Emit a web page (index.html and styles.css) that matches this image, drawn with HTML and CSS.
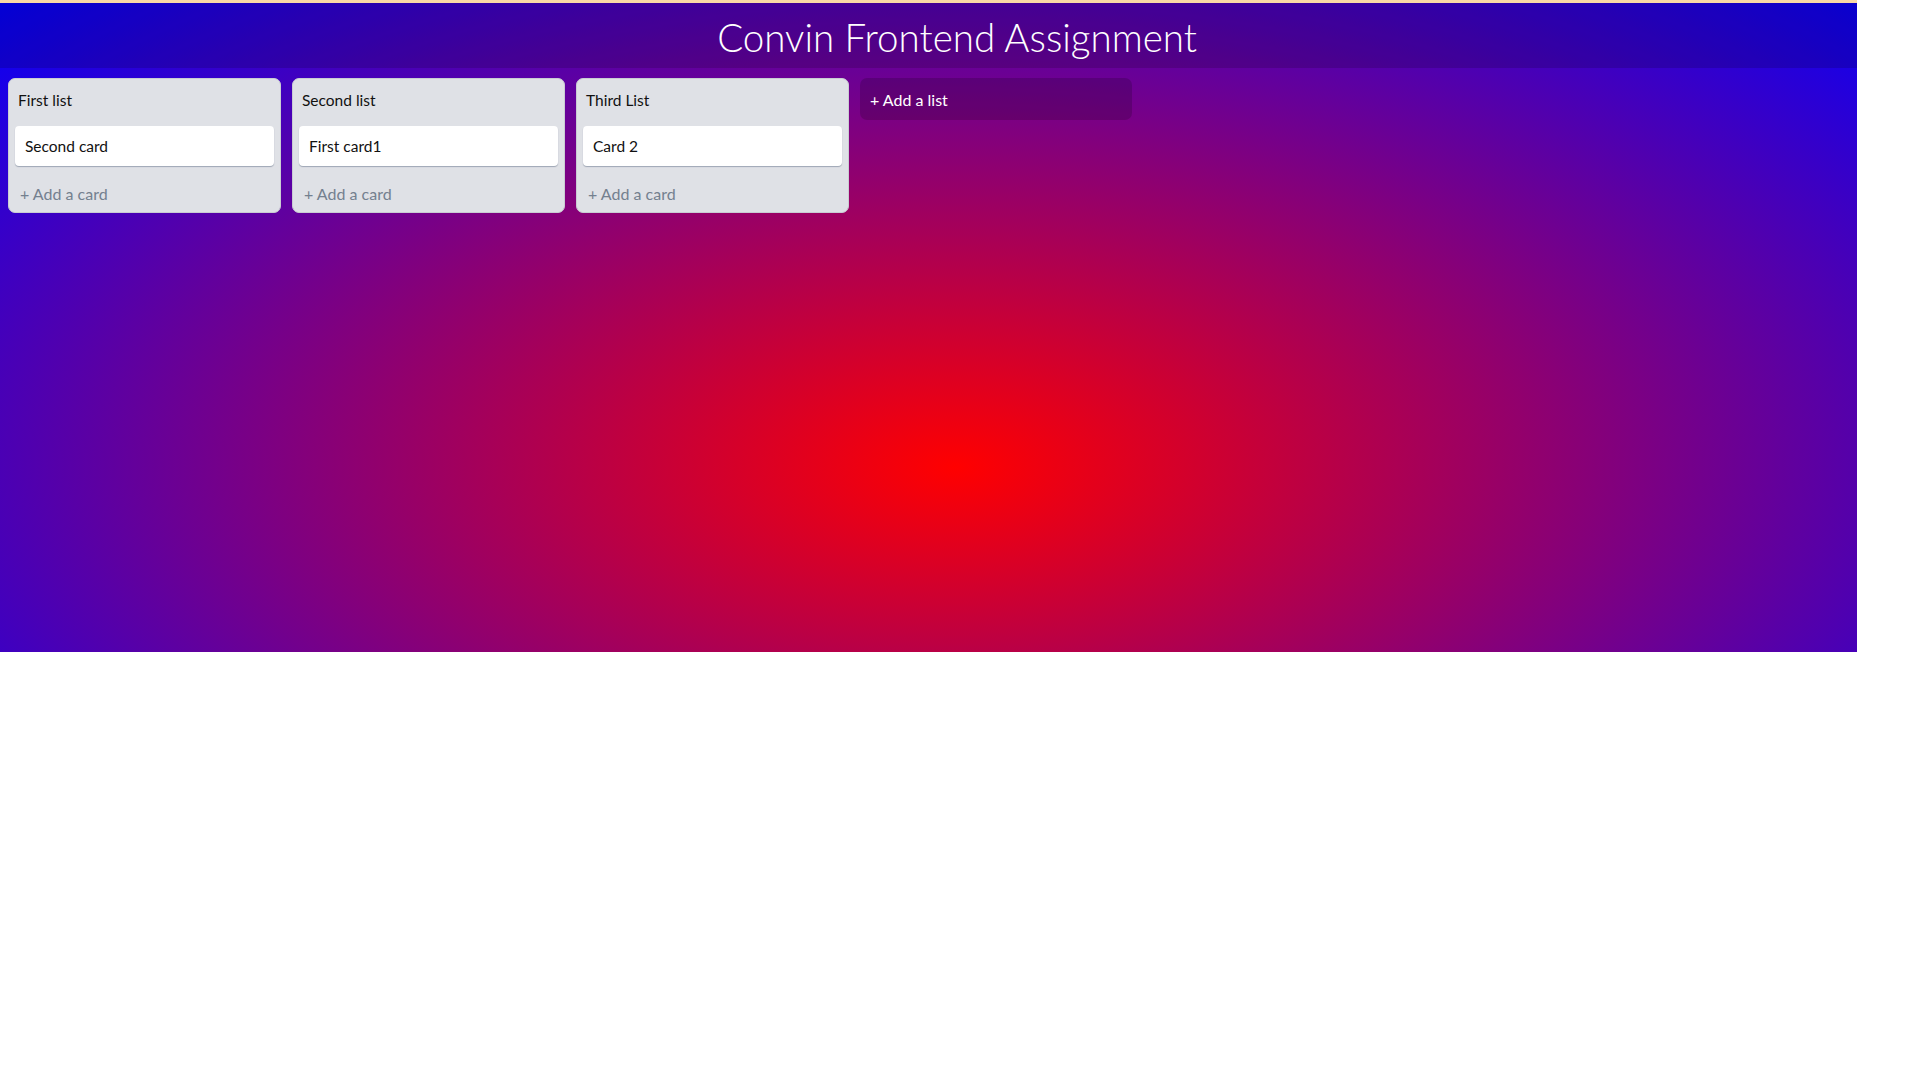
FILE: index.html
```html
<!DOCTYPE html>
<html lang="en">
<head>
<meta charset="utf-8">
<title>Convin Frontend Assignment</title>
<link rel="stylesheet" href="styles.css">
</head>
<body>
<div class="topline"></div>
<div class="app">
  <header class="header">
    <h1 class="title">Convin Frontend Assignment</h1>
  </header>
  <main class="board">
    <section class="list">
      <div class="list-title">First list</div>
      <div class="card">Second card</div>
      <div class="add-card">+ Add a card</div>
    </section>
    <section class="list">
      <div class="list-title">Second list</div>
      <div class="card">First card1</div>
      <div class="add-card">+ Add a card</div>
    </section>
    <section class="list">
      <div class="list-title">Third List</div>
      <div class="card">Card 2</div>
      <div class="add-card">+ Add a card</div>
    </section>
    <div class="add-list">+ Add a list</div>
  </main>
</div>
</body>
</html>
```
FILE: styles.css
```css
html, body {
  margin: 0;
  padding: 0;
  background: #ffffff;
}
body {
  font-family: "Lato", "Noto Sans", sans-serif;
}
.topline {
  width: 1857px;
  height: 3px;
  background: #f9d9a6;
}
.app {
  width: 1857px;
  height: 649px;
  overflow: hidden;
  background: radial-gradient(ellipse 1350px 680px at 955px 464px, #ff0000 0%, #0000ff 100%);
}
.header {
  height: 65px;
  box-sizing: border-box;
  background: rgba(0, 0, 0, 0.15);
  display: flex;
  align-items: center;
  justify-content: center;
  padding-left: 57px;
  padding-top: 3px;
}
.title {
  margin: 0;
  color: #ffffff;
  font-family: "Lato", sans-serif;
  font-weight: 300;
  font-size: 38.5px;
  line-height: 1;
}
.board {
  display: flex;
  align-items: flex-start;
  gap: 11px;
  padding: 10px 8px;
}
.list {
  width: 273px;
  box-sizing: border-box;
  background: #dfe1e6;
  border: 1px solid #c9ccd3;
  border-radius: 7px;
  padding: 0 6px 5px;
}
.list-title {
  height: 47px;
  box-sizing: border-box;
  display: flex;
  align-items: center;
  padding-left: 3px;
  padding-bottom: 5px;
  font-size: 15.5px;
  color: #111111;
}
.card {
  background: #ffffff;
  border-radius: 4px;
  box-shadow: 0 1px 1px rgba(9, 30, 66, 0.3);
  height: 40px;
  display: flex;
  align-items: center;
  padding-left: 10px;
  font-size: 15.5px;
  color: #111111;
}
.add-card {
  height: 41px;
  display: flex;
  align-items: center;
  padding-left: 5px;
  padding-top: 13px;
  box-sizing: border-box;
  font-size: 16px;
  color: #74808f;
}
.add-list {
  width: 272px;
  height: 42px;
  box-sizing: border-box;
  background: rgba(0, 0, 0, 0.17);
  border-radius: 7px;
  display: flex;
  align-items: center;
  padding-left: 10px;
  font-size: 16px;
  color: #ffffff;
}
```
